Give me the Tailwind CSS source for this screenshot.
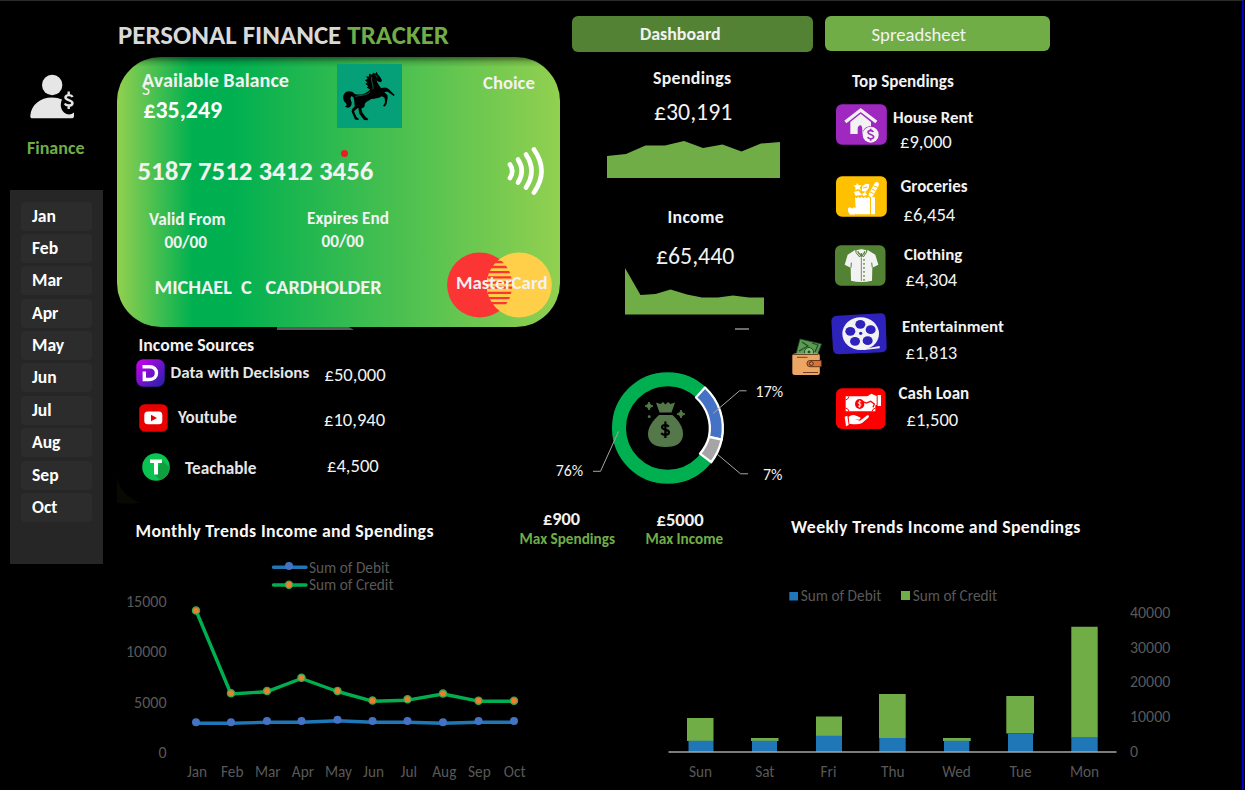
<!DOCTYPE html>
<html lang="en">
<head>
<meta charset="utf-8">
<title>Personal Finance Tracker</title>
<script src="https://cdn.jsdelivr.net/npm/@tailwindcss/browser@4"></script>
</head>
<body class="bg-black">
<div class="flex h-[790px] w-[1244px] overflow-hidden border-t border-r-2 border-t-[#2b2b2b] border-r-[#0000c8] bg-black font-[Carlito,Calibri,Lato,sans-serif] text-[#f2f2f2]">

  <!-- Sidebar -->
  <aside class="w-[117px] shrink-0 pl-[10px]">
    <svg class="mt-[73px] ml-[19px] h-[46px] w-[48px]" viewBox="29 74 48 46">
      <circle cx="52.2" cy="85" r="10.2" fill="#e6e6e6"/>
      <path d="M30.3 116C31 105 40 97.500 52 97.500C56 97.500 59 98.200 62 99.500C60 104 60.500 109 64 112.500C67 115 71 115 74 112.500V116C74 117.500 73 118.300 71.500 118.300H32.500C31 118.300 30.200 117.500 30.300 116Z" fill="#e6e6e6"/>
      <path d="M72.600 97C71.500 94.800 66.500 94.300 65.500 97C64.500 100.500 73 99.500 72.500 103.500C71.500 106.500 66 106 64.800 103.500M68.700 91.500V94.500M68.700 105.500V109" fill="none" stroke="#e6e6e6" stroke-width="2.400"/>
    </svg>
    <p class="mt-[18px] ml-[17px] h-[20px] text-[18px] leading-[20px] font-bold text-[#70ad47]">Finance</p>
    <nav class="mt-[32px] flex h-[374px] w-[93px] flex-col gap-[3.400px] bg-[#262626] px-[11px] pt-[11.500px] text-[17.600px] leading-[29px] font-bold text-white">
      <a class="h-[29px] rounded-[4px] bg-[#2c2c2c] pl-[11px]">Jan</a>
      <a class="h-[29px] rounded-[4px] bg-[#2c2c2c] pl-[11px]">Feb</a>
      <a class="h-[29px] rounded-[4px] bg-[#2c2c2c] pl-[11px]">Mar</a>
      <a class="h-[29px] rounded-[4px] bg-[#2c2c2c] pl-[11px]">Apr</a>
      <a class="h-[29px] rounded-[4px] bg-[#2c2c2c] pl-[11px]">May</a>
      <a class="h-[29px] rounded-[4px] bg-[#2c2c2c] pl-[11px]">Jun</a>
      <a class="h-[29px] rounded-[4px] bg-[#2c2c2c] pl-[11px]">Jul</a>
      <a class="h-[29px] rounded-[4px] bg-[#2c2c2c] pl-[11px]">Aug</a>
      <a class="h-[29px] rounded-[4px] bg-[#2c2c2c] pl-[11px]">Sep</a>
      <a class="h-[29px] rounded-[4px] bg-[#2c2c2c] pl-[11px]">Oct</a>
    </nav>
  </aside>

  <main class="w-[1125px] shrink-0">
    <!-- Header -->
    <header class="flex h-[56px]">
      <h1 class="mt-[18.500px] w-[455px] pl-[1px] text-[26.900px] leading-[30px] font-bold text-[#d9d9d9]">PERSONAL FINANCE <span class="text-[#70ad47]">TRACKER</span></h1>
      <a class="mt-[15px] h-[36px] w-[241px] rounded-[6px] bg-[#548235] pl-[68px] text-[17.900px] leading-[36px] font-bold">Dashboard</a>
      <a class="mt-[14.500px] ml-[12px] h-[35px] w-[225px] rounded-[6px] bg-[#70ad47] pl-[46.500px] text-[18.700px] leading-[38px]">Spreadsheet</a>
    </header>

    <div class="flex h-[450px]">
      <!-- Card and income sources -->
      <section class="w-[433px] shrink-0">
        <div class="relative h-[269.500px] w-[443px] overflow-hidden rounded-[44px] bg-[linear-gradient(180deg,rgba(0,0,0,0.5)_0px,rgba(0,0,0,0.15)_5px,rgba(0,0,0,0)_10px),linear-gradient(90deg,#92d050_0%,#00b050_17%,#00b050_26%,#92d050_100%)] pt-[7px] text-[#f2f2f2]">
          <div class="flex h-[64px]">
            <div class="w-[220px] pl-[25px] font-bold">
              <p class="mt-[6px] h-[20px] text-[20.200px] leading-[20px]">Available Balance</p>
              <p class="mt-[10px] h-[20px] pl-[1.500px] text-[23.800px] leading-[20px] text-white">£35,249</p>
            </div>
            <svg class="h-[64px] w-[65px]" viewBox="111 192 195 190" preserveAspectRatio="none">
              <path d="M111 192H306V382H111Z" fill="#05a078"/>
              <path d="M230 215L234 224L239 228L246 240L243 246L236 245L230 241C232 249 238 256 243 263L257 262L266 266L284 284L281 287L262 274L253 276L262 284L263 292L260 310L255 318L249 317L255 306L254 293L246 288C237 294 224 296 214 296C205 301 199 305 195 309L193 320L184 324L187 336L197 349L205 355L202 359L192 358L178 340L175 322L168 326L162 333L170 350L177 355L175 358L165 357L155 334L156 326L164 318L163 302L160 290L155 288C149 290 152 300 155 306C156 314 151 321 144 322L134 319C140 318 142 313 137 308C129 300 127 288 133 280C140 271 155 271 163 280C170 283 178 283 188 282C199 279 206 273 210 268L200 262L205 258L196 251L202 247L195 240L203 236L198 229L207 229L207 221L216 224L220 218L226 221Z" fill="#000"/>
              <path d="M215 230C211 242 222 254 219 267M166 289C174 284 198 288 210 275M226 224L232 232" stroke="#05704f" stroke-width="2.500" fill="none"/>
            </svg>
            <p class="mt-[9px] ml-[81px] h-[20px] text-[18.700px] leading-[20px] font-bold">Choice</p>
          </div>
          <div class="mt-[18px] flex h-[50px] w-[443px] items-center justify-between pl-[20.500px]">
            <p class="text-[26.850px] leading-[26px] font-bold">5187 7512 3412 3456</p>
            <svg class="mr-[14px] h-[50px] w-[40px]" viewBox="506 146 40 50" fill="none" stroke="#fff" stroke-width="4.700" stroke-linecap="round">
              <path d="M510 164.500Q514.500 171 510 178"/>
              <path d="M518 159.500Q525.500 171 518 182.500"/>
              <path d="M526 154.500Q537 171 526 187.500"/>
              <path d="M534 149.500Q549 171 534 192.500"/>
            </svg>
          </div>
          <div class="mt-[13px] flex h-[43px] font-bold">
            <div class="w-[190px] pl-[32px] text-[17.250px] leading-[22px]">
              <p>Valid From</p>
              <p class="mt-[.500px] pl-[15.500px]">00/00</p>
            </div>
            <div class="text-[17.200px] leading-[22px]">
              <p class="-mt-[1px]">Expires End</p>
              <p class="mt-[1px] pl-[14.500px]">00/00</p>
            </div>
          </div>
          <div class="flex h-[66px]">
            <p class="mt-[25px] w-[292px] pl-[37.500px] text-[20.260px] leading-[20px] font-bold whitespace-pre">MICHAEL  C   CARDHOLDER</p>
            <svg class="ml-[37px] h-[66px] w-[107px]" viewBox="446 251.500 107 66">
              <circle cx="479.700" cy="284.500" r="32.600" fill="#fb3434"/>
              <circle cx="519.200" cy="284.500" r="32.600" fill="#ffcf4a"/>
              <clipPath id="lens"><circle cx="479.700" cy="284.500" r="32.600"/></clipPath>
              <g clip-path="url(#lens)" stroke="#fb3434" stroke-width="2.300">
                <path d="M493 261.500H506M491 266.500H509M489 271.700H511M488 276.900H512.500M487 282H512.500M487 287.200H512.500M488 292.400H512.500M489 297.600H511M491 302.700H509"/>
              </g>
              <text x="455.900" y="288.900" font-size="18.900" font-weight="700" fill="#f2f2f2">MasterCard</text>
            </svg>
          </div>
          <span class="absolute top-[21.500px] left-[25px] text-[17.500px] leading-[20px]">S</span>
          <span class="absolute top-[92.500px] left-[223.500px] h-[7px] w-[7px] rounded-full bg-[#ed1c24]"></span>
        </div>
        <svg class="ml-[160px] h-[3px] w-[77px]" viewBox="0 0 77 3"><path d="M0 0H72L77 3H0Z" fill="#595959"/></svg>

        <h2 class="mt-[5.500px] ml-[21.500px] h-[20px] text-[17.800px] leading-[20px] font-bold">Income Sources</h2>
        <div class="mt-[4px] ml-[19px] flex h-[28px]">
          <svg class="h-[28px] w-[29px]" viewBox="0 0 29 28">
            <defs><linearGradient id="dg" x1="0" y1="0" x2="1" y2="1"><stop offset="0" stop-color="#d000f0"/><stop offset=".55" stop-color="#6a14c8"/><stop offset="1" stop-color="#2020a8"/></linearGradient></defs>
            <rect x=".3" y=".3" width="28.400" height="27.400" rx="7" fill="url(#dg)"/>
            <path d="M8.300 12.500V20.500H13.500C18 20.500 20.500 17.500 20.500 14S18 7.800 13.500 7.800H6.500" fill="none" stroke="#fff" stroke-width="3.400"/>
          </svg>
          <p class="mt-[4px] ml-[5.500px] w-[153px] text-[16.950px] leading-[20px] font-bold text-[#e7e6e6]">Data with Decisions</p>
          <p class="mt-[6px] ml-[1px] text-[18.600px] leading-[20px]">£50,000</p>
        </div>
        <div class="mt-[17px] ml-[22px] flex h-[28px]">
          <svg class="h-[28px] w-[29px]" viewBox="0 0 29 28">
            <rect x=".2" y=".2" width="28.500" height="27.500" rx="5.500" fill="#e60000"/>
            <rect x="5.300" y="7.500" width="18" height="12.800" rx="3.500" fill="#fff"/>
            <path d="M12 10.800L18 14L12 17.200Z" fill="#e60000"/>
          </svg>
          <p class="mt-[3.500px] ml-[10px] w-[147px] text-[17.100px] leading-[20px] font-bold text-[#e7e6e6]">Youtube</p>
          <p class="mt-[5.500px] -ml-[1px] text-[18.600px] leading-[20px]">£10,940</p>
        </div>
        <div class="mt-[21px] ml-[25px] flex h-[29px]">
          <svg class="h-[28px] w-[28px]" viewBox="0 0 28 28">
            <clipPath id="tc"><circle cx="14" cy="14" r="13.800"/></clipPath>
            <g clip-path="url(#tc)"><path d="M0 0H28V28H0Z" fill="#09c451"/><path d="M20 7L34 21L30 34H24L12.500 21Z" fill="#0f9f41"/></g>
            <path d="M8 6.500H20V10H16V21.500H12V10H8Z" fill="#fff"/>
          </svg>
          <p class="mt-[6px] ml-[15px] w-[142px] text-[17.250px] leading-[20px] font-bold text-[#e7e6e6]">Teachable</p>
          <p class="mt-[3px] text-[18.600px] leading-[20px]">£4,500</p>
        </div>
        <svg class="-mt-[6px] h-[28px] w-[24px]" viewBox="0 0 24 28"><path d="M0 0Q3 20 24 27Q8 28 0 27Z" fill="#060a03"/></svg>
      </section>

      <!-- Totals and donut -->
      <section class="w-[240px] shrink-0">
        <h2 class="mt-[10.500px] ml-[103px] h-[20px] text-[17.800px] leading-[20px] font-bold tracking-[0.330px]">Spendings</h2>
        <p class="mt-[14px] ml-[104px] h-[20px] text-[23.800px] leading-[20px]">£30,191</p>
        <svg class="mt-[18.500px] ml-[57px] h-[39px] w-[173px]" viewBox="607 140 173 39"><path d="M607 156L626 154L645.500 145.500H665L684 141L703 148L722.500 144.500L741.500 151.500L761 143.500L780 142V178H607Z" fill="#70ad47"/></svg>
        <h2 class="mt-[27.500px] ml-[117.500px] h-[20px] text-[17.800px] leading-[20px] font-bold tracking-[0.300px]">Income</h2>
        <p class="mt-[19px] ml-[106px] h-[20px] text-[23.800px] leading-[20px]">£65,440</p>
        <svg class="mt-[1.500px] ml-[75px] h-[48px] w-[139px]" viewBox="625 267 139 48"><path d="M625 268L640.500 295L655.500 294L670.500 289.500L687 294.500L702 297.500H718L733 295.500L749 297.500H764V314.500H625Z" fill="#70ad47"/></svg>
        <div class="mt-[13px] ml-[185px] h-[2px] w-[14px] bg-[#6b6b6b]"></div>
        <svg class="mt-[5px] h-[155px] w-[275px] max-w-none" viewBox="550 335 275 155">
          <circle cx="667.700" cy="428" r="48.700" fill="none" stroke="#00b050" stroke-width="14"/>
          <path d="M705 387.500A55.300 55.300 0 0 1 721.700 439.600L709 436.900A41.700 41.700 0 0 0 696 397.500Z" fill="#4472c4" stroke="#fff" stroke-width="2.300" stroke-linejoin="round"/>
          <path d="M721.700 439.600A55.300 55.300 0 0 1 711.200 462.200L700 453.700A41.700 41.700 0 0 0 709 436.900Z" fill="#a5a5a5" stroke="#fff" stroke-width="2.300" stroke-linejoin="round"/>
          <g fill="none" stroke="#a6a6a6" stroke-width="1"><path d="M713 413.500L739.500 390.800H746.500"/><path d="M717 454L740.500 473.800H748"/><path d="M618.500 431.500L600.500 471.300H593"/></g>
          <g font-size="15.900" fill="#f2f2f2"><text x="755.600" y="397">17%</text><text x="763" y="480">7%</text><text x="555.700" y="476.200">76%</text></g>
          <!-- money bag -->
          <g fill="#54784a">
            <path d="M656 402.500L660.500 404L663 402L665.500 404.500L668 402L670.500 404L675 402.500L671.500 412.500H659.500Z"/>
            <path d="M659 415H672.500C679 421 683 427 683 434C683 442.500 677 447 665.500 447S648 442.500 648 434C648 427 652.500 421 659 415Z"/>
            <path d="M649 402L650.300 404.700L653 406L650.300 407.300L649 410L647.700 407.300L645 406L647.700 404.700ZM681 410L682.300 412.700L685 414L682.300 415.300L681 418L679.700 415.300L677 414L679.700 412.700Z" stroke="#54784a"/>
            <circle cx="649.200" cy="416.700" r="1.400"/>
          </g>
          <path d="M668.600 426.800C667.500 424.300 662 424.500 662 427.300C662 430.300 669 429 669 432.300C669 435.400 662.500 435.500 661.500 432.800M665.400 421.500V438" fill="none" stroke="#000" stroke-width="2.200"/>
          <!-- wallet -->
          <path d="M800 339L821.500 344L817 356L796 354Z" fill="#5d9a54" stroke="#1f4a24" stroke-width=".8"/>
          <path d="M802 342L808 346L799 351M812 343L818 345L815 352" fill="none" stroke="#204d26" stroke-width="1.200"/>
          <circle cx="809" cy="352" r="4.500" fill="#84bd79" stroke="#204d26" stroke-width="1"/>
          <circle cx="809" cy="352" r="1.500" fill="#204d26"/>
          <rect x="792.300" y="353.500" width="27.500" height="21.500" rx="2.500" fill="#eda765"/>
          <path d="M793 354.500H818.500M797 357.300H807.500M803 372.500H818" stroke="#6d4123" stroke-width="1" fill="none"/>
          <path d="M810 360.500H821.300V366.700H810A3.100 3.100 0 0 1 810 360.500Z" fill="#d97435" stroke="#5a2f18" stroke-width=".9"/>
          <circle cx="811.300" cy="363.600" r="1.900" fill="#c98a50" stroke="#3f2413" stroke-width=".9"/>
        </svg>
      </section>

      <!-- Top spendings -->
      <section class="w-[400px] pl-[41px]">
        <h2 class="mt-[15px] ml-[21px] h-[20px] text-[17.100px] leading-[20px] font-bold">Top Spendings</h2>
        <div class="mt-[12px] ml-[5px] flex h-[41px]">
          <svg class="h-[41px] w-[51px] shrink-0" viewBox="168 133 153 123"><rect x="168" y="134" width="152.500" height="121" rx="18" fill="#9e28c0"/>
            <path d="M196 187L242 151L289 187" fill="none" stroke="#f2f2f2" stroke-width="10" stroke-linejoin="miter"/>
            <path d="M211 187L242 162L273 187V200C258 200 250 207 248 222H247C248 208 246 197 242 197C237 197 233 201 233 208V223H211Z" fill="#f2f2f2"/>
            <circle cx="272" cy="225" r="24" fill="#f2f2f2"/>
            <path d="M280 217C277 211 264 212 264 218C264 226 281 223 281 232C280 239 266 239 263 232M272 207V213M272 237V243" fill="none" stroke="#9e28c0" stroke-width="5"/>
          </svg>
          <div class="pl-[6px]">
            <p class="mt-[4px] h-[20px] text-[16.900px] leading-[20px] font-bold">House Rent</p>
            <p class="mt-[3.500px] h-[20px] pl-[7px] text-[18.600px] leading-[20px]">£9,000</p>
          </div>
        </div>
        <div class="mt-[31px] ml-[5px] flex h-[41px]">
          <svg class="h-[41px] w-[51px] shrink-0" viewBox="168 349 153 123"><rect x="168" y="350" width="152.500" height="121" rx="18" fill="#ffc000"/>
            <path d="M225 411L230 416L235 411L240 416L245 411L250 416L255 411L260 416L265 411L270 416V464H228Z M273 412H285V464H273Z" fill="#fff"/>
            <path d="M204 447C207 441 213 444 216 447C219 443 226 442 230 447C235 455 226 465 222 465C219 465 218 463 216 465C210 467 202 456 204 447Z" fill="#fff"/>
            <path d="M231 369L236 377L245 376L239 384L243 392L233 388L225 393L227 384L220 377L229 377Z M222 396L236 393L246 406L226 408Z M247 380L257 372L268 374L266 386L257 396L245 394Z M246 403L256 397L261 406L250 409Z" fill="#fff"/>
            <path d="M290 374L273 405" stroke="#fff" stroke-width="14" stroke-linecap="round"/><path d="M280 378L292 383M275 388L286 393M270 397L281 402M249 385L262 382" stroke="#ffc000" stroke-width="3"/>
          </svg>
          <div class="pl-[13.500px]">
            <p class="mt-[.500px] h-[20px] text-[17px] leading-[20px] font-bold">Groceries</p>
            <p class="mt-[8px] h-[20px] pl-[3px] text-[18.600px] leading-[20px]">£6,454</p>
          </div>
        </div>
        <div class="mt-[28px] ml-[4px] flex h-[41px]">
          <svg class="h-[41px] w-[51px] shrink-0" viewBox="165 555 153 123"><rect x="165" y="556" width="151.500" height="121" rx="18" fill="#548235"/>
            <path d="M225 570L203 584L194 614L212 623L213 662Q244 670 276 662L277 623L295 614L286 584L263 570L244 592Z" fill="#f2f2f2"/>
            <path d="M228 569Q245 563 260 569L260 576L250 591L244 579L239 591L228 578Z" fill="#f2f2f2" stroke="#548235" stroke-width="3"/>
            <path d="M233 574L239 584M255 574L250 584" stroke="#548235" stroke-width="4"/>
            <path d="M244 592V663" stroke="#548235" stroke-width="2.500"/><path d="M252 597V662" stroke="#548235" stroke-width="4" stroke-dasharray="5 7"/><path d="M213 623L214 608M277 623L275 608" stroke="#548235" stroke-width="3"/>
          </svg>
          <div class="pl-[18px]">
            <p class="-mt-[.500px] h-[20px] text-[16.900px] leading-[20px] font-bold">Clothing</p>
            <p class="mt-[5.500px] h-[20px] pl-[1.500px] text-[18.600px] leading-[20px]">£4,304</p>
          </div>
        </div>
        <div class="mt-[27px] flex h-[42px]">
          <svg class="h-[42px] w-[56px] shrink-0" viewBox="152 68 168 126"><path d="M170 76L301 69Q315 69 316 83L319 171Q319 185 305 186L176 192Q159 192 158 177L153 92Q154 77 170 76Z" fill="#2e22bd"/>
            <ellipse cx="241" cy="130" rx="55" ry="49" fill="#f2f2f2"/><path d="M240 178L298 167V174L250 179Z" fill="#f2f2f2"/>
            <g fill="#2e22bd"><ellipse cx="240" cy="102" rx="15" ry="13"/><ellipse cx="271" cy="118" rx="15" ry="13"/><ellipse cx="262" cy="151" rx="15" ry="13"/><ellipse cx="224" cy="153" rx="15" ry="13"/><ellipse cx="210" cy="123" rx="15" ry="13"/><circle cx="241" cy="129" r="5"/></g>
          </svg>
          <div class="pl-[15px]">
            <p class="mt-[3.500px] h-[20px] text-[16.950px] leading-[20px] font-bold">Entertainment</p>
            <p class="mt-[6.500px] h-[20px] pl-[3.500px] text-[18.600px] leading-[20px]">£1,813</p>
          </div>
        </div>
        <div class="mt-[33px] ml-[5px] flex h-[41px]">
          <svg class="h-[41px] w-[50px] shrink-0" viewBox="168 296 150 123"><rect x="168" y="297" width="148.500" height="122" rx="18" fill="#f00"/>
            <path d="M197 321H270L286 337V366H197Z" fill="#fff"/>
            <path d="M247 338L262 321L274 313L290 320V346L281 350L275 340L263 346Z M293 317H303V350H293Z" fill="#fff"/>
            <path d="M249 337L259 341L272 336L283 344L279 354" fill="none" stroke="#f00" stroke-width="4"/>
            <ellipse cx="239" cy="344" rx="14" ry="15" fill="#f00"/><path d="M244 338C239 334 234 337 235 342L243 345C244 351 238 353 234 350M239 333V355" fill="none" stroke="#fff" stroke-width="2.500"/>
            <path d="M197 332Q205 330 207 321M197 356Q205 358 207 366M286 356Q278 358 276 366" fill="none" stroke="#f00" stroke-width="3"/>
            <path d="M194 382L202 379L206 407L198 411Z M206 382Q218 373 230 380L240 384Q244 389 237 391L224 390L240 394L262 378Q270 377 265 385L246 401Q235 407 208 403Z" fill="#fff"/>
          </svg>
          <div class="pl-[12.500px]">
            <p class="-mt-[4px] h-[20px] text-[17px] leading-[20px] font-bold">Cash Loan</p>
            <p class="mt-[5.500px] h-[20px] pl-[8px] text-[18.600px] leading-[20px]">£1,500</p>
          </div>
        </div>
      </section>
    </div>

    <!-- Trends -->
    <div class="flex h-[283px]">
      <section class="w-[402px] shrink-0">
        <h2 class="mt-[14px] ml-[18.500px] h-[20px] text-[17.800px] leading-[20px] font-bold tracking-[0.350px] whitespace-nowrap text-[#f8f8f8]">Monthly Trends Income and Spendings</h2>
        <svg class="mt-[9px] h-[240px] w-[423px] max-w-none" viewBox="117 550 423 240">
          <g font-size="16" fill="#595959" text-anchor="end"><text x="166.500" y="607">15000</text><text x="166.500" y="657">10000</text><text x="166.500" y="707.500">5000</text><text x="166.500" y="758">0</text></g>
          <g font-size="15.300" fill="#595959"><text x="309" y="573">Sum of Debit</text><text x="309" y="590">Sum of Credit</text></g>
          <g font-size="15.300" fill="#595959" text-anchor="middle"><text x="197" y="777">Jan</text><text x="232.300" y="777">Feb</text><text x="267.800" y="777">Mar</text><text x="302.900" y="777">Apr</text><text x="338.500" y="777">May</text><text x="373.500" y="777">Jun</text><text x="408.800" y="777">Jul</text><text x="444.300" y="777">Aug</text><text x="479.400" y="777">Sep</text><text x="514.700" y="777">Oct</text></g>
          <g fill="none" stroke-width="3.400" stroke-linecap="round" stroke-linejoin="round">
            <path d="M273.500 567.300H306M196 723.300H231L267 722.300H301.500L337.500 720.800L372.500 722.300H407.500L443 723.300L478.500 722.300H514" stroke="#1f77b8"/>
            <path d="M273.500 585H306M196 610.500L231 694L267 691.700L301.500 678.500L337.500 691.500L372.500 701.200L407.500 700.200L443 694L478.500 701.200H514" stroke="#00b050"/>
          </g>
          <g fill="#4472c4"><circle cx="289" cy="566" r="4"/><circle cx="196" cy="722.300" r="4"/><circle cx="231" cy="722.300" r="4"/><circle cx="267" cy="721" r="4"/><circle cx="301.500" cy="721" r="4"/><circle cx="337.500" cy="719.800" r="4"/><circle cx="372.500" cy="721" r="4"/><circle cx="407.500" cy="721" r="4"/><circle cx="443" cy="722.300" r="4"/><circle cx="478.500" cy="721" r="4"/><circle cx="514" cy="721" r="4"/></g>
          <g fill="#ed7d31" stroke="#2fae4c" stroke-width="1.300"><circle cx="289" cy="584.800" r="3.600"/><circle cx="196" cy="610.500" r="3.600"/><circle cx="231" cy="693.300" r="3.600"/><circle cx="267" cy="691" r="3.600"/><circle cx="301.500" cy="677.800" r="3.600"/><circle cx="337.500" cy="691" r="3.600"/><circle cx="372.500" cy="700.500" r="3.600"/><circle cx="407.500" cy="699.300" r="3.600"/><circle cx="443" cy="693.500" r="3.600"/><circle cx="478.500" cy="700.800" r="3.600"/><circle cx="514" cy="700.800" r="3.600"/></g>
        </svg>
      </section>
      <section class="w-[723px] shrink-0">
        <div class="flex h-[63px] font-bold whitespace-nowrap">
          <div class="w-[126px] pl-[.500px]">
            <p class="mt-[2px] h-[20px] pl-[23.500px] text-[18.300px] leading-[20px]">£900</p>
            <p class="h-[20px] text-[15.200px] leading-[20px] text-[#70ad47]">Max Spendings</p>
          </div>
          <div class="w-[146px] pl-[.500px]">
            <p class="mt-[3px] h-[20px] pl-[11px] text-[18.600px] leading-[20px]">£5000</p>
            <p class="-mt-[1px] h-[20px] text-[15.200px] leading-[20px] text-[#70ad47]">Max Income</p>
          </div>
          <h2 class="mt-[10px] text-[17.800px] leading-[20px] tracking-[0.350px] text-[#f8f8f8]">Weekly Trends Income and Spendings</h2>
        </div>
        <svg class="ml-[101px] h-[220px] w-[622px]" viewBox="620 570 622 220">
          <g fill="#70ad47"><path d="M901 591H910V600H901ZM687 718H713.500V741H687ZM751 738H778.500V741H751ZM816 716.500H842V736H816ZM879 694H905.700V738H879ZM943 738H970.700V741H943ZM1006.300 696H1034V733.500H1006.300ZM1071.300 626.700H1097.700V737.500H1071.300Z"/></g>
          <g fill="#1f77b8"><path d="M789.300 592H798V600.500H789.300ZM688.500 740.700H713.500V752H688.500ZM752 740.700H777V752H752ZM816 735.700H842V752H816ZM879.300 738H905.700V752H879.300ZM944 740.700H969.300V752H944ZM1008 733.500H1033V752H1008ZM1071.300 737H1097.700V752H1071.300Z"/></g>
          <path d="M668.500 752H1116.500" stroke="#a6a6a6" stroke-width="1.700"/>
          <g font-size="15.300" fill="#595959"><text x="800.700" y="600.500">Sum of Debit</text><text x="912.700" y="600.500">Sum of Credit</text></g>
          <g font-size="15.900" fill="#595959"><text x="1130" y="617.500">40000</text><text x="1130" y="652.500">30000</text><text x="1130" y="687">20000</text><text x="1130" y="722">10000</text><text x="1130" y="757">0</text></g>
          <g font-size="15.300" fill="#595959" text-anchor="middle"><text x="700.500" y="777">Sun</text><text x="764.800" y="777">Sat</text><text x="828.500" y="777">Fri</text><text x="892.700" y="777">Thu</text><text x="956.500" y="777">Wed</text><text x="1020.500" y="777">Tue</text><text x="1084.500" y="777">Mon</text></g>
        </svg>
      </section>
    </div>
  </main>
</div>
</body>
</html>
